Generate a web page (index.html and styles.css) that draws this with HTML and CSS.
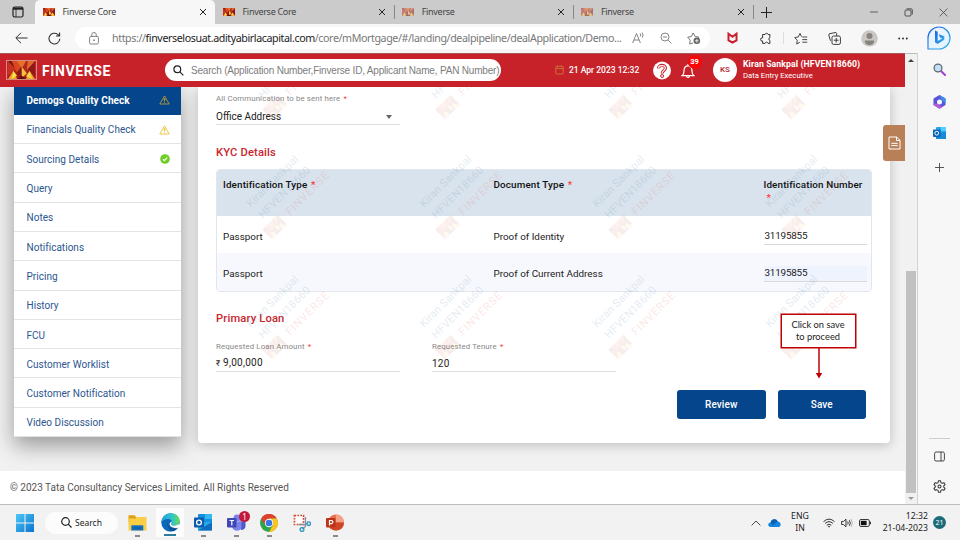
FILE: index.html
```
<!DOCTYPE html>
<html lang="en">
<head>
<meta charset="utf-8">
<title>Finverse Core</title>
<link rel="stylesheet" href="styles.css">
</head>
<body>
<svg width="0" height="0" class="defs">
  <symbol id="logo" viewBox="0 0 30 20">
    <rect width="30" height="20" fill="#a52019"/>
    <path d="M0 0h8l-3 8z" fill="#7c1518"/><path d="M8 0l7 8 7-8z" fill="#e8702a"/><path d="M0 0l9 10L0 16z" fill="#c8321f"/>
    <path d="M4 0h6l5 8-5 5z" fill="#d9481f"/><path d="M20 0h6l-5 13-5-5z" fill="#b02a1c"/><path d="M30 0l-8 9 8 8z" fill="#8d1a19"/>
    <path d="M22 0h8l-9 10z" fill="#e2682a"/><path d="M15 6l6 8-6 5z" fill="#f5c33b"/><path d="M15 6l-6 8 6 5z" fill="#8d1a19"/>
    <path d="M0 20l6-9 4 9z" fill="#f0a12f"/><path d="M4 20l2-9 4 5z" fill="#fbe04c"/><path d="M30 20l-6-9-4 9z" fill="#ef9a2d"/><path d="M24 11l3 9-7-3z" fill="#f9d548"/>
    <path d="M10 20l5-4 5 4z" fill="#5f1014"/>
  </symbol>
  <symbol id="x" viewBox="0 0 8 8"><path d="M1 1l6 6M7 1L1 7" stroke="#222" stroke-width="1" fill="none"/></symbol>
  <symbol id="warn" viewBox="0 0 11 10"><path d="M5.5.9L10.2 9H.8z M5.5 3v3.6M5.5 7.3v1" fill="none" stroke="currentColor" stroke-width=".9" stroke-linejoin="round"/><path d="M4.2 5.2l1.3-1.6 1.3 1.6" fill="none" stroke="currentColor" stroke-width=".6"/></symbol>
</svg>

<div class="tabs">
  <div class="tabmenu"><svg width="12" height="12" viewBox="0 0 12 12" fill="none" stroke="#222" stroke-width="1.2"><rect x="1" y="1" width="10" height="10" rx="1.8"/><path d="M1 2.6h10" stroke-width="2.2"/><path d="M4 3v8" stroke-width=".8"/></svg></div>
  <div class="tab active"><svg class="fav"><use href="#logo"/></svg><span>Finverse Core</span><svg class="close"><use href="#x"/></svg></div>
  <div class="tab"><svg class="fav"><use href="#logo"/></svg><span>Finverse Core</span><svg class="close"><use href="#x"/></svg></div>
  <div class="tab sep dim"><svg class="fav"><use href="#logo"/></svg><span>Finverse</span><svg class="close"><use href="#x"/></svg></div>
  <div class="tab sep dim"><svg class="fav"><use href="#logo"/></svg><span>Finverse</span><svg class="close"><use href="#x"/></svg></div>
  <div class="newtab sep"><svg width="11" height="11" viewBox="0 0 11 11" stroke="#222" stroke-width="1"><path d="M5.5 0v11M0 5.5h11"/></svg></div>
  <div class="winctl">
    <svg width="8" height="8" viewBox="0 0 8 8" stroke="#444" stroke-width=".8"><path d="M0 4h8"/></svg>
    <svg width="9" height="9" viewBox="0 0 9 9" fill="none" stroke="#444" stroke-width=".9"><rect x="1" y="2" width="6" height="6" rx="1"/><path d="M2.6.8H7a1.3 1.3 0 0 1 1.3 1.3v4.3"/></svg>
    <svg width="9" height="9" viewBox="0 0 8 8"><path d="M.5.5l7 7M7.5.5l-7 7" stroke="#444" stroke-width=".7"/></svg>
  </div>
</div>

<div class="toolbar">
  <div><svg width="13" height="12" viewBox="0 0 13 12" fill="none" stroke="#333" stroke-width="1"><path d="M12.5 6H1M6 .8L.8 6 6 11.2"/></svg></div>
  <div><svg width="13" height="13" viewBox="0 0 13 13" fill="none" stroke="#333" stroke-width="1.1"><path d="M11.8 6.8A5.4 5.4 0 1 1 9.8 2.4L11.4 4M11.6.5V4H8"/></svg></div>
  <div class="address">
    <svg class="lock" width="10" height="13" viewBox="0 0 10 13" fill="none" stroke="#777" stroke-width=".9"><rect x=".6" y="4.4" width="8.8" height="7.6" rx="1.2"/><path d="M2.7 4.4V2.8a2.3 2.3 0 0 1 4.6 0v1.6"/><circle cx="5" cy="8.2" r=".5" fill="#777"/></svg>
    <span class="url">https://<b>finverselosuat.adityabirlacapital.com</b>/core/mMortgage/#/landing/dealpipeline/dealApplication/Demo...</span>
    <span class="aicons">
      <svg width="13" height="12" viewBox="0 0 13 12" fill="none" stroke="#777" stroke-width=".9"><path d="M.6 11L4.5 1.5 8.4 11M2 8h5M8.3 1.5q1 1.5 0 3M10.2.6q1.8 2.4 0 5"/></svg>
      <svg width="12" height="12" viewBox="0 0 12 12" fill="none" stroke="#777" stroke-width=".9"><circle cx="5" cy="5" r="4"/><path d="M8 8l3.4 3.4M3 5h4"/></svg>
      <svg width="14" height="13" viewBox="0 0 14 13" fill="none" stroke="#666" stroke-width=".9"><path d="M6 11L2.7 12l.5-3.9L.7 5.2l3.6-.7L6.2 1l1.9 3.5 3.7.6-1 1"/><circle cx="9.8" cy="8.8" r="3.3" fill="#666" stroke="none"/><path d="M9.8 7v3.6M8 8.8h3.6" stroke="#fff" stroke-width=".8"/></svg>
    </span>
  </div>
  <div><svg width="11" height="12" viewBox="0 0 11 12"><path d="M1.500 1.700l4 3 4-3v6.600l-4 2.200-4-2.200z" fill="none" stroke="#c8202c" stroke-width="2"/></svg></div>
  <div><svg width="13" height="13" viewBox="0 0 13 13" fill="none" stroke="#333" stroke-width="1" stroke-linejoin="round"><path d="M4 2.5h2a1.6 1.6 0 0 1 3.1 0h1.8v3a1.6 1.6 0 0 0 0 3v2.9H9.1a1.6 1.6 0 0 0-3.1 0H3.6V9a1.6 1.6 0 1 1 0-3.1V2.5z"/></svg></div>
  <div><i class="vline"></i></div>
  <div><svg width="14" height="13" viewBox="0 0 14 13" fill="none" stroke="#333" stroke-width=".9" stroke-linejoin="round"><path d="M5.8 10.3L2.7 12l.6-3.8L.7 5.6l3.6-.7L6 1.4l1.500 3.300M8.300 5h4.900M8.300 7.600h4.900M8.300 10.200h4.900"/></svg></div>
  <div><svg width="13" height="13" viewBox="0 0 13 13" fill="none" stroke="#333" stroke-width=".95"><rect x="4" y="4" width="8.4" height="8.4" rx="1.5"/><path d="M8.2 5.8v4.8M5.8 8.2h4.8M2.5 8.8L.9 3.4A1.4 1.4 0 0 1 2 1.6L7 .6a1.4 1.4 0 0 1 1.700 1V4"/></svg></div>
  <div><svg width="17" height="17" viewBox="0 0 17 17"><circle cx="8.5" cy="8.5" r="8.3" fill="#cbc8c3"/><circle cx="8.5" cy="5.9" r="3" fill="#87837e"/><path d="M3.8 10.4h9.4c0 3-1.8 4.6-4.7 4.6s-4.7-1.6-4.7-4.6z" fill="#87837e"/></svg></div>
  <div><svg width="10" height="3" viewBox="0 0 10 3" fill="#222"><circle cx="1.2" cy="1.5" r=".9"/><circle cx="5" cy="1.5" r=".9"/><circle cx="8.8" cy="1.5" r=".9"/></svg></div>
  <div><svg width="24" height="24" viewBox="0 0 24 24"><defs><linearGradient id="bg" x1="0" y1="0" x2="1" y2="1"><stop offset="0" stop-color="#1d5fe0"/><stop offset="1" stop-color="#35b8f1"/></linearGradient></defs><path d="M1 23V12A11 11 0 1 1 12 23z" fill="#e9f4fe" stroke="url(#bg)" stroke-width="1.2"/><path d="M8 4.500l2.700 1.200v9.300l4.500-2.400-2.200-1-1.300-3.300 5.600 2v3.400l-6.600 4.300L8 16.300z" fill="url(#bg)"/></svg></div>
</div>

<div class="main">
  <div class="app">
    <header class="header">
      <svg class="brandlogo"><use href="#logo"/></svg>
      <div class="brand">FINVERSE</div>
      <div class="search"><svg width="11" height="11" viewBox="0 0 11 11" fill="none" stroke="#222" stroke-width="1.2"><circle cx="4.3" cy="4.3" r="3.4"/><path d="M6.8 6.8l3.6 3.6"/></svg><span>Search (Application Number,Finverse ID, Applicant Name, PAN Number)</span></div>
      <div class="date"><svg width="9" height="10" viewBox="0 0 9 10" fill="none" stroke="#c9773f" stroke-width=".9"><rect x=".8" y="1.4" width="7.4" height="7.6" rx=".6"/><path d="M.8 3.6h7.4M2.6.3v1.8M6.4.3v1.8"/></svg><span>21 Apr 2023 12:32</span></div>
      <svg class="help" width="18" height="19" viewBox="0 0 18 19"><circle cx="9" cy="9.5" r="9" fill="#fff"/><path d="M5.6 7.3C5.4 3.6 12.4 3.4 12.4 7c0 2.6-3.2 2.7-3.2 5.4" fill="none" stroke="#c7222a" stroke-width="3.2"/><path d="M5.6 7.1C5.6 3.8 12.3 3.6 12.3 7c0 2.6-3.1 2.7-3.1 5.2" fill="none" stroke="#fff" stroke-width="1.2"/><circle cx="9.1" cy="15" r="1.5" fill="#fff" stroke="#c7222a" stroke-width="1"/></svg>
      <div class="bell"><svg width="14" height="16" viewBox="0 0 14 16" fill="none" stroke="#fff" stroke-width="1.2"><path d="M1 12.7h12c-1.8-1.2-2-2.6-2-4.8 0-3-1.2-5-4-5s-4 2-4 5c0 2.200-.2 3.600-2 4.800zM7 3V1M5.600 13c0 2 2.800 2 2.800 0"/></svg><span class="badge">39</span></div>
      <div class="avatar">KS</div>
      <div class="user"><strong>Kiran Sankpal (HFVEN18660)</strong><span>Data Entry Executive</span></div>
    </header>

    <div class="content">
      <nav class="menu">
        <a class="on">Demogs Quality Check<svg class="w"><use href="#warn"/></svg></a>
        <a>Financials Quality Check<svg class="w"><use href="#warn"/></svg></a>
        <a>Sourcing Details<svg class="ok" viewBox="0 0 10 10"><circle cx="5" cy="5" r="4.800" fill="#6fce25"/><path d="M2.900 5.100l1.500 1.500 2.800-3" fill="none" stroke="#fff" stroke-width="1.300"/></svg></a>
        <a>Query</a>
        <a>Notes</a>
        <a>Notifications</a>
        <a>Pricing</a>
        <a>History</a>
        <a>FCU</a>
        <a>Customer Worklist</a>
        <a>Customer Notification</a>
        <a>Video Discussion</a>
      </nav>
      <section class="card">
        <div class="field select"><label>All Communication to be sent here <em>*</em></label><div class="value"><span>Office Address</span><i class="caret"></i></div></div>
        <h2 class="kyc">KYC Details</h2>
        <div class="table">
          <div class="tr th"><div>Identification Type <em>*</em></div><div>Document Type <em>*</em></div><div>Identification Number<br><em class="wrapped">*</em></div></div>
          <div class="tr"><div>Passport</div><div>Proof of Identity</div><div class="input">31195855</div></div>
          <div class="tr alt"><div>Passport</div><div>Proof of Current Address</div><div class="input">31195855</div></div>
        </div>
        <h2 class="loan">Primary Loan</h2>
        <div class="fields">
          <div class="field"><label>Requested Loan Amount <em>*</em></label><div class="value"><span><small>₹</small> 9,00,000</span></div></div>
          <div class="field"><label>Requested Tenure <em>*</em></label><div class="value"><span>120</span></div></div>
        </div>
        <div class="actions"><button>Review</button><button>Save</button></div>
      </section>
      <div class="marks" id="marks"></div>
      <div class="callout">Click on save<br>to proceed<svg width="8" height="31" viewBox="0 0 8 31"><path d="M4 0v26" stroke="#c00000" stroke-width="1.500"/><path d="M.8 25h6.400L4 30.500z" fill="#c00000"/></svg></div>
      <div class="notetab"><svg width="13" height="14" viewBox="0 0 13 14" fill="none" stroke="#fff" stroke-width="1"><path d="M1 1h7.600L12 4.300V13H1zM8.500 1v3.500H12M3.300 7.300h6.400M3.300 9.600h6.400"/></svg></div>
    </div>
    <footer class="footer">© 2023 Tata Consultancy Services Limited. All Rights Reserved</footer>
  </div>
  <div class="scroll"><i class="up"></i><i class="thumb"></i><i class="down"></i></div>
  <aside class="edgebar">
    <svg width="13" height="13" viewBox="0 0 13 13"><path d="M8 8l4 4" stroke="#a33fd6" stroke-width="2" stroke-linecap="round"/><circle cx="5" cy="5" r="3.900" fill="#bfe0f7" stroke="#64696f" stroke-width="1.300"/></svg>
    <svg width="13" height="14" viewBox="0 0 13 14"><path d="M6.500 0l6 3.500v6.500l-6 3.800-6-3.800V3.500z" fill="#5a55d8"/><path d="M6.500 0l6 3.500v5L8.500 5z" fill="#3a8fe8"/><path d="M.5 8.500v1.500l6 3.800 3-1.900L4.500 9z" fill="#b75bd6"/><circle cx="6.500" cy="6.900" r="2.500" fill="#f7f7f7"/></svg>
    <svg width="13" height="12" viewBox="0 0 13 12"><rect x="3" width="10" height="12" rx="1" fill="#28a8ea"/><path d="M3 6l10-1v7H3z" fill="#1a88d8"/><path d="M8 0h5v4H8z" fill="#50d0fa"/><rect y="2.500" width="7.500" height="7.500" rx=".8" fill="#0a64b8"/><circle cx="3.750" cy="6.200" r="1.900" fill="none" stroke="#fff"/></svg>
    <svg width="9" height="9" viewBox="0 0 9 9" stroke="#444" stroke-width=".9"><path d="M4.500 0v9M0 4.500h9"/></svg>
    <hr>
    <svg width="11" height="11" viewBox="0 0 11 11" fill="none" stroke="#333" stroke-width=".9"><rect x=".6" y="1" width="9.800" height="9" rx="1.500"/><path d="M7 1v9"/></svg>
    <svg width="13" height="13" viewBox="0 0 24 24" fill="none" stroke="#333" stroke-width="1.900" stroke-linejoin="round"><path d="M10 1.500h4l.7 3.300 2.400 1.400 3.200-1 2 3.400-2.500 2.300v2.200l2.500 2.300-2 3.400-3.200-1-2.400 1.400-.7 3.300h-4l-.7-3.300-2.400-1.400-3.200 1-2-3.400 2.500-2.300v-2.200L1.700 8.600l2-3.400 3.200 1 2.400-1.400z"/><circle cx="12" cy="12" r="2.800"/></svg>
  </aside>
</div>

<div class="taskbar">
  <svg class="win" width="18" height="18" viewBox="0 0 18 18"><defs><linearGradient id="wg" x1="0" y1="0" x2="1" y2="1"><stop offset="0" stop-color="#4cc8f6"/><stop offset="1" stop-color="#0a73cf"/></linearGradient></defs><path d="M0 0h8.500v8.500H0zM9.500 0H18v8.500H9.500zM0 9.500h8.500V18H0zM9.500 9.500H18V18H9.500z" fill="url(#wg)"/></svg>
  <div class="tsearch"><svg width="11" height="11" viewBox="0 0 11 11" fill="none" stroke="#222" stroke-width="1.200"><circle cx="4.500" cy="4.500" r="3.800"/><path d="M7.200 7.200l3.300 3.300"/></svg><span>Search</span></div>
  <div class="apps">
    <div class="a run"><svg width="19" height="17" viewBox="0 0 19 17"><path d="M.5 1.200h6l1.700 2H18v5H.5z" fill="#dfa012"/><path d="M.5 4.500h7L9 3h9.500v13.500H.5z" fill="#fbcf45"/><path d="M3.300 16.500v-4.200q0-1 1-1h10q1 0 1 1v4.200z" fill="#1273c4"/><path d="M5.500 14h7.600" stroke="#0a4e8e"/></svg></div>
    <div class="a cur"><svg width="19" height="19" viewBox="0 0 19 19"><defs><linearGradient id="eg" x1="0" y1="0" x2="1" y2="0"><stop offset="0" stop-color="#1fa2e4"/><stop offset=".6" stop-color="#31c6c6"/><stop offset="1" stop-color="#6adf52"/></linearGradient></defs><circle cx="9.500" cy="9.500" r="9.200" fill="#0c67b8"/><path d="M.4 9.300C1.200 3.600 5 .3 9.700.3c5.500 0 9 3.600 9 7.500 0 3-2.200 4.700-5.100 4.700-2.300 0-3.100-.8-2.600-1.700C12 8.500 10.300 6 7 6 3.800 6 1 7.600.4 9.300z" fill="url(#eg)"/><path d="M7 8.500c-1.200 3 .9 7 5 7 2.300 0 4-.7 5.600-2-.9 1.600-2.400 3.300-4.300 4.200C8.600 18.400 4.700 12.500 7 8.500z" fill="#0a4a8c"/><path d="M10.300 8.300c1.300 1.700-.7 2.700.5 3.700 1.200.9 4.600.9 6.700-.9l1.500 1.400-1.500 2.300c-3 1-8.700 0-9-4z" fill="#f9fafa"/></svg></div>
    <div class="a run"><svg width="18" height="17" viewBox="0 0 18 17"><rect x="4" width="14" height="16" rx="1" fill="#1490df"/><path d="M11 0h7v5h-7z" fill="#35b8f1"/><path d="M4 8l14 0v8.500H4z" fill="#28a8ea"/><path d="M4 16.500L18 8v7.500q0 1-1 1z" fill="#0f6cbd"/><rect y="3.500" width="10" height="10" rx="1" fill="#0a5cad"/><circle cx="5" cy="8.500" r="2.400" fill="none" stroke="#fff" stroke-width="1.300"/></svg></div>
    <div class="a run"><svg width="19" height="17" viewBox="0 0 19 17"><circle cx="15.500" cy="5" r="2.500" fill="#5059c9"/><circle cx="10" cy="4" r="3.500" fill="#7b83eb"/><path d="M12 7.500h6.500V12c0 2.500-2 4-4.500 4z" fill="#5059c9"/><path d="M5 7.500h9.500v4.700c0 6-9 6-9.500 0z" fill="#7b83eb"/><rect y="4" width="9.500" height="9.500" rx="1" fill="#4048b5"/><path d="M2.600 6.500h4.400M4.800 6.500v5" stroke="#fff" stroke-width="1.200"/></svg><span class="count">1</span></div>
    <div class="a run"><svg width="18" height="18" viewBox="0 0 18 18"><circle cx="9" cy="9" r="9" fill="#2ea44c"/><path d="M1.200 4.500A9 9 0 0 1 16.800 4.500H9L5.100 11.200z" fill="#e2402f"/><path d="M16.800 4.500A9 9 0 0 1 9 18l3.900-6.800L9 4.500z" fill="#fcc31e"/><circle cx="9" cy="9" r="4.200" fill="#fff"/><circle cx="9" cy="9" r="3.300" fill="#3576e8"/></svg></div>
    <div class="a"><svg width="18" height="18" viewBox="0 0 18 18" fill="none"><rect x="1.500" y="1.500" width="9" height="9" fill="#fff" stroke="#d34a31" stroke-width="1.700" stroke-dasharray="1.700 1.200"/><path d="M12.500 3v9.500L9.300 15M5.500 10.500h6l3.500-1" stroke="#8a9199" stroke-width="1.300"/><circle cx="9" cy="15.500" r="1.900" stroke="#2494c8" stroke-width="1.300"/><circle cx="15.700" cy="9.700" r="1.800" stroke="#2494c8" stroke-width="1.300"/></svg></div>
    <div class="a run"><svg width="18" height="17" viewBox="0 0 18 17"><circle cx="10" cy="8.500" r="8" fill="#e8704c"/><path d="M10 .5a8 8 0 0 1 8 8h-8z" fill="#f5a186"/><path d="M2 8.500h16a8 8 0 0 1-16 0z" fill="#cf4526"/><rect y="4" width="9.500" height="9.500" rx="1" fill="#bc3418"/><path d="M3.500 11.500v-5h1.800a1.500 1.500 0 0 1 0 3.100H3.500" stroke="#fff" stroke-width="1.200" fill="none"/></svg></div>
  </div>
  <div class="tray">
    <svg class="chev" width="10" height="6" viewBox="0 0 10 6" fill="none" stroke="#333" stroke-width=".9"><path d="M.6 5.400L5 1l4.400 4.400"/></svg>
    <svg class="cloud" width="13" height="8" viewBox="0 0 13 8"><path d="M3 8C-.8 8-.5 3.600 2.600 3.400 3.500-.6 8.500-.8 9.600 2.600 13 2.400 13.800 8 10.500 8z" fill="#1484dc"/><path d="M2.600 3.400C3.500-.6 8.500-.8 9.600 2.600L5 6z" fill="#0b5fb3"/></svg>
    <div class="lang">ENG<br>IN</div>
    <svg class="wifi" width="12" height="10" viewBox="0 0 12 10" fill="none" stroke="#222" stroke-width=".9"><path d="M.5 3.600q5.500-5 11 0M2.100 5.400q3.900-3.500 7.800 0M3.700 7.200q2.300-2 4.600 0"/><circle cx="6" cy="8.600" r=".8" fill="#222" stroke="none"/></svg>
    <svg class="vol" width="12" height="10" viewBox="0 0 12 10" fill="none" stroke="#222" stroke-width=".9"><path d="M.6 3.500h1.800L5 1.200v7.600L2.400 6.500H.6zM6.700 3.500q1 1.500 0 3M8.300 2.200q2 2.800 0 5.600"/><path d="M10 1q2.700 4 0 8" stroke="#aaa"/></svg>
    <svg class="bat" width="12" height="8" viewBox="0 0 12 8"><rect x=".5" y=".5" width="9.800" height="7" rx="1.400" fill="none" stroke="#222" stroke-width=".9"/><rect x="1.800" y="1.800" width="5.800" height="4.400" fill="#111"/><path d="M11.300 2.700v2.600" stroke="#222" stroke-width="1.200"/></svg>
    <div class="clock">12:32<br>21-04-2023</div>
    <span class="notif">21</span>
  </div>
</div>
<script src="marks.js"></script>
</body>
</html>
```
FILE: styles.css
```
* { box-sizing: border-box; }
body { margin: 0; width: 960px; height: 540px; overflow: hidden; display: flex; flex-direction: column; font-family: Roboto, "Liberation Sans", sans-serif; background: #f2f2f2; }
svg { display: block; flex: none; }
.defs { position: absolute; }

.tabs { height: 24px; flex: none; display: flex; background: #cbcbcb; font: 9px/24px "Noto Sans", sans-serif; color: #444; }
.tabmenu { width: 35px; display: flex; align-items: center; justify-content: center; }
.tab { width: 179.2px; display: flex; align-items: center; padding: 0 8px; }
.tab span { flex: 1; letter-spacing: -.3px; padding-left: 7.500px; }
.tab.active { background: #f7f7f7; border-radius: 5px 5px 0 0; width: 180px; }
.fav { width: 12px; height: 8px; }
.close { width: 8px; height: 8px; }
.dim .fav { opacity: .5; }
.sep { background: linear-gradient(#888, #888) 0 50% / 1px 14px no-repeat; }
.newtab { width: 28px; display: flex; align-items: center; justify-content: center; }
.winctl { flex: 1; display: flex; align-items: center; justify-content: flex-end; gap: 26px; padding-right: 12.500px; }

.toolbar { height: 29px; flex: none; background: #f7f7f7; display: grid; grid-template-columns: 42px 24px 9px 635px 44px 22px 14px 22px 44px 26px 42px 30px; }
.toolbar > div { display: flex; align-items: center; justify-content: center; height: 28px; }
.toolbar > .address { grid-column: 4; background: #fff; border-radius: 11px; height: 22px; margin-top: 3px; justify-content: flex-start; padding: 0 9px 0 14px; }
.url { margin-left: 13px; width: 520px; white-space: nowrap; font: 10.700px/20px "Noto Sans", sans-serif; letter-spacing: -.41px; color: #777; }
.url b { font-weight: 400; color: #222; }
.aicons { display: flex; flex: 1; align-items: center; justify-content: space-between; }
.vline { width: 1px; height: 12px; background: #ddd; }

.main { flex: 1; display: flex; min-height: 0; }
.app { width: 905px; display: flex; flex-direction: column; position: relative; }
.header { height: 33.500px; flex: none; background: #c7222a; border-top: 1px solid #a8575b; display: flex; align-items: center; color: #fff; padding-left: 6px; position: relative; z-index: 5; }
.brandlogo { width: 31px; height: 20px; border: 1px solid #d68a80; }
.brand { width: 123px; margin-left: 5px; font-weight: 700; font-size: 14px; letter-spacing: .6px; padding-top: 1px; }
.search { width: 336px; height: 22px; background: #fff; border-radius: 11px; display: flex; align-items: center; padding-left: 8px; font: 10px "Liberation Sans", sans-serif; letter-spacing: -.19px; color: #7d7d7d; white-space: nowrap; }
.search span { margin-left: 7px; }
.date { margin-left: 54px; width: 98px; display: flex; align-items: center; gap: 5px; font-size: 8.500px; font-weight: 500; white-space: nowrap; }
.bell { margin: 2px 0 0 9.500px; position: relative; }
.badge { position: absolute; left: 7px; top: -8px; width: 14px; height: 14px; border-radius: 50%; background: #fb0508; font-size: 7.500px; font-weight: 700; line-height: 14px; text-align: center; }
.avatar { margin-left: 18.500px; width: 24px; height: 24px; border-radius: 50%; background: #fff; color: #b3262c; font-size: 8px; font-weight: 500; line-height: 24px; text-align: center; }
.user { margin-left: 6px; display: flex; flex-direction: column; gap: 1px; white-space: nowrap; }
.user strong { font-size: 8.700px; line-height: 11px; font-weight: 700; letter-spacing: .1px; }
.user span { font-size: 7.700px; line-height: 10px; }

.content { flex: 1; display: flex; align-items: flex-start; position: relative; overflow: hidden; background: #f1f1f1; padding-left: 14px; min-height: 0; }
.menu { width: 167px; margin-top: -1px; background: #fff; box-shadow: 0 9px 20px rgba(0,0,0,.36); }
.menu a { height: 29.300px; display: flex; align-items: center; justify-content: space-between; padding: 2px 11px 0 12.500px; border-bottom: 1px solid #e3e3e3; color: #2c568f; font-size: 10px; letter-spacing: .03px; white-space: nowrap; }
.menu a.on { background: #04458b; color: #fff; font-weight: 700; border: 0; letter-spacing: .08px; padding-top: 0; }
.w { width: 11px; height: 10px; color: #eebf33; }
.on .w { color: #b79a35; }
.ok { width: 10px; height: 10px; }
.card { width: 692px; height: 356px; margin-left: 17px; padding: 6.500px 18px 0 18px; background: #fff; border-radius: 0 0 4px 4px; box-shadow: 0 2px 12px rgba(0,0,0,.22); display: flex; flex-direction: column; }
.card em { font-style: normal; color: #f33; margin-left: 1px; }
.card .wrapped { margin-left: 3px; }
.field { width: 184px; border-bottom: 1px solid #dedede; }
.field label { display: block; font-size: 7.800px; letter-spacing: .15px; line-height: 12px; color: #888; }
.value { display: flex; align-items: center; justify-content: space-between; font-size: 10px; line-height: 14px; color: #222; margin-top: 4px; height: 15px; }
.fields .value { margin-top: 3px; letter-spacing: .25px; }
.value small { font-size: 8px; }
.caret { border: 3px solid transparent; border-top: 4px solid #666; border-bottom: 0; margin-right: 8px; }
h2 { margin: 0; color: #c9252d; font-size: 11.200px; font-weight: 500; line-height: 14px; letter-spacing: .15px; }
.kyc { margin-top: 21px; }
.loan { margin-top: 20px; }
.table { margin-top: 8.500px; width: 656px; border: 1px solid #e2e6ee; border-radius: 4px; overflow: hidden; font-size: 9.900px; color: #222; }
.tr { display: grid; grid-template-columns: 270.500px 270px 103px; height: 37.300px; align-items: center; padding: 4px 0 0 6px; }
.th { background: #d9e3ed; height: 46.500px; align-items: start; padding-top: 8.500px; font-weight: 500; letter-spacing: .13px; line-height: 13px; color: #111; }
.input { height: 16px; line-height: 14px; border-bottom: 1px solid #d9d9d9; padding-left: 1px; letter-spacing: -.2px; }
.alt { background: #f7f8fd; }
.alt .input { background: #eef3fe; }
.fields { display: flex; gap: 32px; margin-top: 15.500px; }
.actions { display: flex; justify-content: flex-end; gap: 12px; padding-right: 6px; margin-top: 17.500px; }
button { width: 88.500px; height: 29px; border: 0; border-radius: 3px; background: #04458b; color: #fff; font: 500 10px Roboto, sans-serif; letter-spacing: .1px; }

.marks { position: absolute; left: 198px; top: -70px; display: grid; grid-template-columns: repeat(4, 173px); grid-auto-rows: 120px; opacity: .12; pointer-events: none; }
.marks text { font: 11px Roboto, sans-serif; }
.marks use { opacity: .6; }
.callout { position: absolute; left: 780.500px; top: 227px; width: 75px; height: 34px; border: 1.500px solid #c00000; background: #fff; font: 9.300px/12px Lato, sans-serif; color: #222; text-align: center; padding-top: 4px; box-shadow: 0 0 0 .5px #c00000; }
.callout svg { position: absolute; left: 33px; top: 33px; }
.notetab { position: absolute; right: 0; top: 38px; width: 22px; height: 36px; border-radius: 3px 0 0 3px; background: #b97f56; display: flex; align-items: center; justify-content: center; }
.footer { height: 33px; flex: none; background: #fff; padding: 1px 0 0 10px; font-size: 10px; line-height: 32px; color: #555; }

.scroll { width: 12px; background: #f1f1f1; display: flex; flex-direction: column; align-items: center; padding: 5px 0 4px; border-top: 1px solid #bbb; }
.up { border: 3px solid transparent; border-bottom: 3px solid #444; border-top: 0; }
.thumb { margin-top: auto; width: 10px; height: 222px; background: #c1c1c1; }
.down { border: 3px solid transparent; border-top: 3px solid #999; border-bottom: 0; margin-top: 4px; }
.edgebar { width: 43px; background: #f7f7f7; border-left: 1px solid #d3d3d3; display: flex; flex-direction: column; align-items: center; padding: 10px 0 11px; }
.edgebar svg + svg { margin-top: 18.500px; }
.edgebar svg:nth-child(4) { margin-top: 24px; }
.edgebar hr { width: 21px; border: 0; border-top: 1px solid #ccc; margin: auto 0 12px; }

.taskbar { height: 36px; flex: none; border-top: 1px solid #bdbdbd; background: #f2f2f2; display: flex; align-items: center; padding-left: 16px; font-family: "Noto Sans", sans-serif; color: #222; }
.tsearch { margin-left: 11px; width: 73px; height: 22px; border-radius: 11px; background: #fcfcfc; display: flex; align-items: center; padding-left: 15.500px; gap: 3.500px; font-size: 8.500px; }
.apps { display: flex; margin-left: 2.500px; height: 35px; }
.a { width: 33px; display: flex; align-items: center; justify-content: center; position: relative; }
.run { background: linear-gradient(#888, #888) 50% 30px / 5px 2px no-repeat; }
.cur { background: linear-gradient(#2b7f9c, #2b7f9c) 50% 29px / 12px 2px no-repeat, linear-gradient(#fcfcfc, #fcfcfc) 50% 3px / 28px 29px no-repeat; }
.count { position: absolute; left: 19.500px; top: 6px; width: 11px; height: 11px; border-radius: 50%; background: #c4183c; color: #fff; font-size: 8px; line-height: 11px; text-align: center; }
.tray { margin-left: auto; display: flex; align-items: center; padding-right: 14px; font-size: 8.700px; line-height: 11.500px; }
.cloud { margin-left: 7px; }
.lang { width: 20px; margin-left: 9px; text-align: center; }
.wifi { margin-left: 13px; }
.vol { margin-left: 6px; }
.bat { margin-left: 6px; }
.clock { width: 57px; text-align: right; white-space: nowrap; }
.notif { margin-left: 5px; width: 13px; height: 13px; border-radius: 50%; background: #1c6b78; color: #fff; font-size: 7px; line-height: 13px; text-align: center; }
```
FILE: marks.js
```
// Repeat the user watermark over the whole work area.
const mark = `<svg width="173" height="120" viewBox="0 0 173 120">
  <text fill="#2c6ca0" transform="translate(53 71) rotate(-45)" textLength="68">Kiran Sankpal</text>
  <text fill="#2c6ca0" transform="translate(65 82) rotate(-45)" textLength="68">HFVEN18660</text>
  <text fill="#e0453a" transform="translate(92 79) rotate(-45)" textLength="56">FINVERSE</text>
  <g transform="translate(64 93) rotate(-45)"><use href="#logo" width="22" height="14"/></g>
</svg>`;
document.getElementById("marks").innerHTML = mark.repeat(12);
```
